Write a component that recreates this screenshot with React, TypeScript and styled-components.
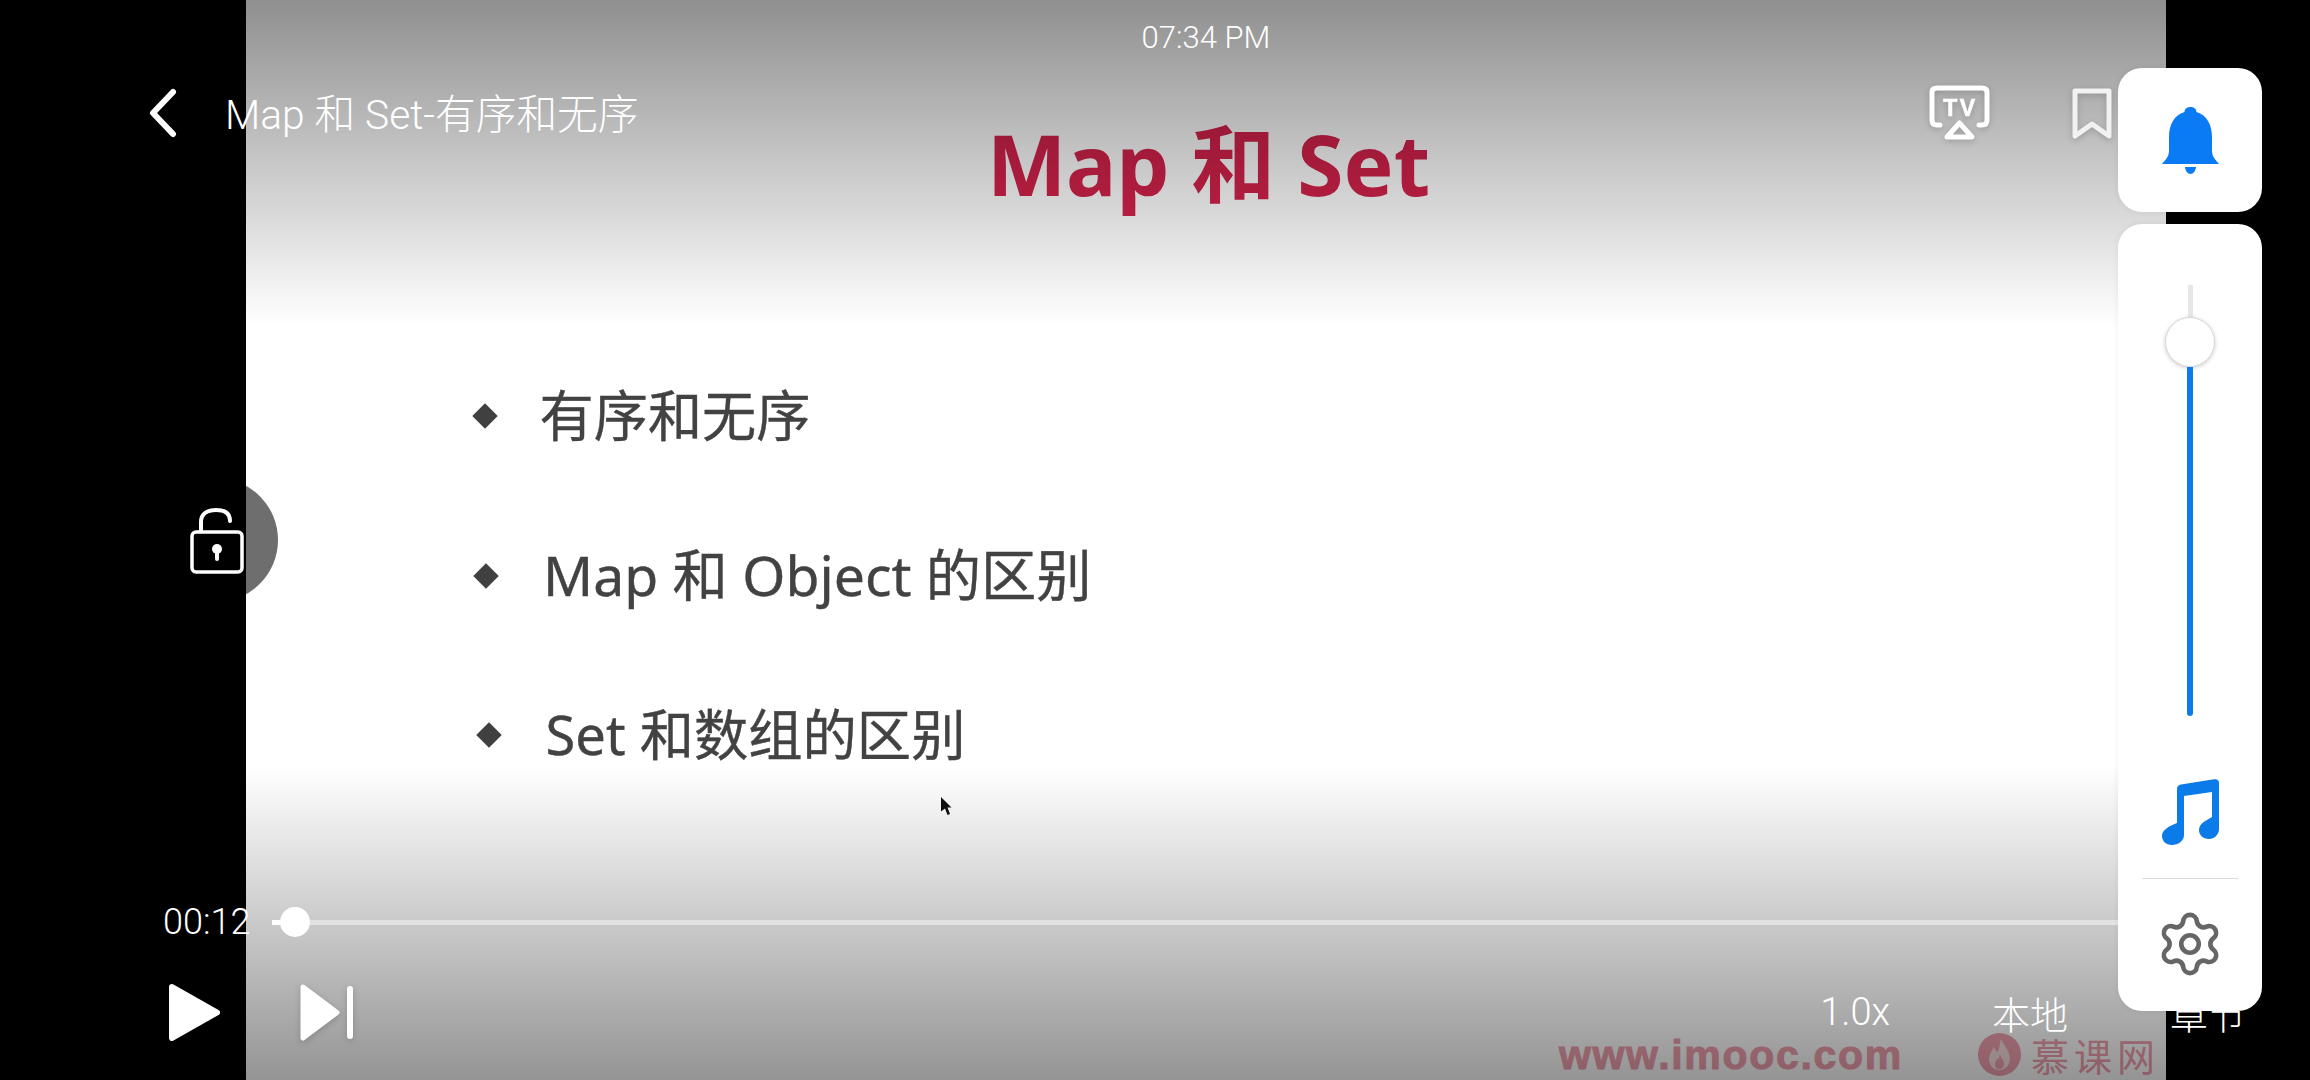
import React from 'react';
import styled, { createGlobalStyle } from 'styled-components';
import { Settings } from 'lucide-react';

const CJK = '"Noto Sans CJK SC", sans-serif';

const GlobalStyle = createGlobalStyle`
  html, body {
    margin: 0;
    padding: 0;
    background: #000;
    overflow: hidden;
  }
`;

const Stage = styled.div`
  position: relative;
  width: 2310px;
  height: 1080px;
  padding-left: 246px;
  box-sizing: border-box;
  background: #000;
  overflow: hidden;
  font-family: Roboto, ${CJK};
`;

const Slide = styled.div`
  display: flex;
  flex-direction: column;
  width: 1920px;
  height: 1080px;
  background: #fff;
`;

const SlideTitle = styled.h1`
  margin: 114px 0 0;
  height: 100px;
  padding-left: 5px;
  line-height: 100px;
  text-align: center;
  font-family: "Noto Sans", ${CJK};
  font-size: 84px;
  font-weight: 700;
  color: #d4224b;
`;

const BulletList = styled.ul`
  display: flex;
  flex-direction: column;
  gap: 79.5px;
  margin: 162px 0 0;
  padding: 0;
  list-style: none;
`;

const Bullet = styled.li<{ $indent: number; $gap: number; $size: number }>`
  display: flex;
  align-items: center;
  gap: ${({ $gap }) => $gap}px;
  height: 80px;
  padding-left: ${({ $indent }) => $indent}px;
  font-family: "Noto Sans", ${CJK};
  font-size: ${({ $size }) => $size}px;
  color: #424242;
  -webkit-text-stroke: 0.4px #424242;
`;

const BulletText = styled.span`
  margin-top: -8px;
`;

const Diamond = styled.span`
  width: 18px;
  height: 18px;
  margin: 0 3.5px;
  background: #404040;
  transform: rotate(45deg);
`;

const Watermark = styled.div`
  display: flex;
  align-items: center;
  justify-content: flex-end;
  margin-top: auto;
  padding: 0 11px 4px 0;
  line-height: 42px;
  color: #f0a0ae;
`;

const WatermarkUrl = styled.span`
  margin-right: 75px;
  font-family: "Liberation Sans", sans-serif;
  font-size: 41px;
  font-weight: 700;
  letter-spacing: 1.7px;
  -webkit-text-stroke: 1px #f0a0ae;
`;

const WatermarkName = styled.span`
  margin-left: 10px;
  margin-right: -5px;
  font-family: ${CJK};
  font-size: 38px;
  font-weight: 400;
  letter-spacing: 5px;
`;

const Cursor = styled.svg`
  position: absolute;
  left: 941px;
  top: 797px;
`;

const TopScrim = styled.div`
  position: absolute;
  inset: 0 0 auto 0;
  height: 325px;
  background: linear-gradient(to bottom, rgba(0, 0, 0, 0.44), rgba(0, 0, 0, 0));
`;

const BottomScrim = styled.div`
  position: absolute;
  inset: auto 0 0 0;
  height: 313px;
  background: linear-gradient(to top, rgba(0, 0, 0, 0.42), rgba(0, 0, 0, 0));
`;

const Controls = styled.div`
  position: absolute;
  inset: 0;
  display: flex;
  flex-direction: column;
  color: #fff;
`;

const Clock = styled.div`
  height: 30px;
  margin-top: 23px;
  padding-left: 102px;
  line-height: 30px;
  text-align: center;
  font-size: 31px;
  font-weight: 300;
`;

const TopBar = styled.div`
  display: flex;
  align-items: center;
  height: 56px;
  margin-top: 32px;
  padding-left: 149px;
`;

const PageTitle = styled.div`
  margin-left: 48px;
  padding-top: 4px;
  font-size: 40.7px;
  font-weight: 300;
  line-height: 56px;
  white-space: nowrap;
`;

const TopActions = styled.div`
  display: flex;
  align-items: center;
  gap: 82px;
  margin-left: auto;
  padding-right: 198px;
`;

const IconShadow = styled.svg`
  display: block;
  filter: drop-shadow(0 2px 3px rgba(0, 0, 0, 0.18));
`;

const LockToggle = styled.div`
  position: absolute;
  left: 154px;
  top: 478px;
  width: 124px;
  height: 124px;
  border-radius: 50%;
  background: rgba(0, 0, 0, 0.57);
`;

const LockIcon = styled.svg`
  position: absolute;
  left: 190px;
  top: 508px;
`;

const Timeline = styled.div`
  display: flex;
  align-items: center;
  height: 30px;
  margin-top: auto;
  padding: 0 110px 0 163px;
`;

const TimeLabel = styled.div`
  width: 109px;
  font-size: 36px;
  font-weight: 300;
  line-height: 30px;
  white-space: nowrap;
`;

const Track = styled.div`
  position: relative;
  flex: 1;
  height: 5px;
  background: linear-gradient(to right, #fff 23px, rgba(255, 255, 255, 0.45) 23px);
`;

const Knob = styled.div`
  position: absolute;
  left: 8px;
  top: -12.5px;
  width: 30px;
  height: 30px;
  border-radius: 50%;
  background: #fff;
`;

const BottomBar = styled.div`
  display: flex;
  align-items: center;
  height: 60px;
  margin-top: 45px;
  margin-bottom: 38px;
  padding-left: 168px;
`;

const NextIcon = styled(IconShadow)`
  margin-left: 79px;
`;

const BottomActions = styled.div`
  display: flex;
  align-items: center;
  gap: 102px;
  margin-left: auto;
  padding-right: 64px;
  font-size: 38px;
  font-weight: 300;
`;

const SideColumn = styled.div`
  position: absolute;
  left: 2118px;
  top: 68px;
  display: flex;
  flex-direction: column;
  gap: 12px;
  width: 144px;
`;

const Card = styled.div`
  display: flex;
  flex-direction: column;
  align-items: center;
  border-radius: 24px;
  background: #fff;
  box-shadow: 0 0 6px rgba(0, 0, 0, 0.07);
`;

const BellCard = styled(Card)`
  justify-content: center;
  height: 144px;
`;

const MixerCard = styled(Card)`
  height: 787px;
  padding-top: 61px;
  box-sizing: border-box;
`;

const RailTop = styled.div`
  width: 5px;
  height: 32px;
  background: #e6e6e6;
`;

const Thumb = styled.div`
  width: 48px;
  height: 48px;
  border: 1px solid #d8d8d8;
  border-radius: 50%;
  background: #fff;
  box-shadow: 0 1px 4px rgba(0, 0, 0, 0.2);
`;

const RailFill = styled.div`
  width: 6px;
  height: 349px;
  border-radius: 0 0 3px 3px;
  background: #0a7be8;
`;

const MusicIcon = styled.svg`
  display: block;
  margin-top: 63px;
`;

const Divider = styled.div`
  width: 96px;
  height: 1px;
  margin-top: 33px;
  background: #d9d9d9;
`;

const GearIcon = styled(Settings)`
  display: block;
  margin-top: 30px;
  color: #666;
`;

export default function App(): JSX.Element {
  return (
    <Stage>
      <GlobalStyle />
      <Slide>
        <SlideTitle>Map 和 Set</SlideTitle>
        <BulletList>
          <Bullet $indent={226} $gap={42.5} $size={54.2}><Diamond /><BulletText>有序和无序</BulletText></Bullet>
          <Bullet $indent={227} $gap={45} $size={55.3}><Diamond /><BulletText>Map 和 Object 的区别</BulletText></Bullet>
          <Bullet $indent={230} $gap={44.5} $size={54.3}><Diamond /><BulletText>Set 和数组的区别</BulletText></Bullet>
        </BulletList>
        <Watermark>
          <WatermarkUrl>www.imooc.com</WatermarkUrl>
          <svg width="43" height="43" viewBox="0 0 43 43">
            <circle cx="21.5" cy="21.5" r="21.5" fill="#f0a0ae" />
            <path d="M23 6c2 6 9 11 9 20 0 6-5 11-11 11S11 32 11 26c0-5 3-8 5-12 1 3 2 4 4 5 1-4 2-8 3-13z" fill="#f6dde0" />
            <path d="M22 22c1 3 4 5 4 9 0 3-2 5-5 5s-4-2-4-5c0-3 2-4 3-6 0 1 1 2 1 2 0-2 0-3 1-5z" fill="#f0a0ae" />
          </svg>
          <WatermarkName>慕课网</WatermarkName>
        </Watermark>
      </Slide>
      <Cursor width="11" height="18" viewBox="0 0 11 18">
        <path d="M0 0 L10.5 10.5 H6.5 L9 17 L6.5 18 L4 11.5 L0 14.5 Z" fill="#111" />
      </Cursor>
      <TopScrim />
      <BottomScrim />
      <LockToggle />
      <Controls>
        <Clock>07:34 PM</Clock>
        <TopBar>
          <svg width="28" height="50" viewBox="0 0 28 50">
            <polyline points="24,4 4,25 24,46" fill="none" stroke="#fff" strokeWidth="6" strokeLinecap="round" strokeLinejoin="round" />
          </svg>
          <PageTitle>Map 和 Set-有序和无序</PageTitle>
          <TopActions>
            <IconShadow width="61" height="56" viewBox="0 0 61 56">
              <path d="M11 40 H8 Q3 40 3 35 V7 Q3 3 8 3 H53 Q58 3 58 7 V35 Q58 40 53 40 H50" fill="none" stroke="#fff" strokeWidth="5" strokeLinecap="round" />
              <text x="31.5" y="31" textAnchor="middle" fontFamily="Liberation Sans" fontWeight="700" fontSize="23" letterSpacing="2.5" stroke="#fff" strokeWidth="0.6" fill="#fff">TV</text>
              <polygon points="30.5,38 43,52 18,52" fill="none" stroke="#fff" strokeWidth="5" strokeLinejoin="round" />
            </IconShadow>
            <IconShadow width="40" height="51" viewBox="0 0 40 51">
              <path d="M3 3 H37 V48 L20 36 L3 48 Z" fill="none" stroke="#f2f2f2" strokeWidth="5" strokeLinejoin="round" />
            </IconShadow>
          </TopActions>
        </TopBar>
        <Timeline>
          <TimeLabel>00:12</TimeLabel>
          <Track>
            <Knob />
          </Track>
        </Timeline>
        <BottomBar>
          <IconShadow width="53" height="59" viewBox="0 0 53 59">
            <polygon points="4,4 49,29.5 4,55" fill="#fff" stroke="#fff" strokeWidth="6" strokeLinejoin="round" />
          </IconShadow>
          <NextIcon width="53" height="59" viewBox="0 0 53 59">
            <polygon points="3,4 37,29.5 3,55" fill="#fff" stroke="#fff" strokeWidth="5" strokeLinejoin="round" />
            <rect x="47" y="3" width="6" height="53" rx="3" fill="#fff" />
          </NextIcon>
          <BottomActions>
            <span>1.0x</span>
            <span>本地</span>
            <span>章节</span>
          </BottomActions>
        </BottomBar>
      </Controls>
      <LockIcon width="54" height="66" viewBox="0 0 54 66">
        <path d="M11 24 V14 C11 5 18 2 26 2 C34 2 40 5 40 13" fill="none" stroke="#fff" strokeWidth="4" strokeLinecap="round" />
        <rect x="2" y="24" width="50" height="40" rx="4" fill="#000" stroke="#fff" strokeWidth="3.5" />
        <circle cx="27" cy="41" r="5" fill="#fff" />
        <rect x="25" y="42" width="4" height="11" rx="2" fill="#fff" />
      </LockIcon>
      <SideColumn>
        <BellCard>
          <svg width="57" height="67" viewBox="0 0 57 67">
            <path d="M28.5 0 C32 0 34.5 2 34.5 5 C45 8 50 18 50 30 V44 C50 50 54 53 57 57 H0 C3 53 7 50 7 44 V30 C7 18 12 8 22.5 5 C22.5 2 25 0 28.5 0 Z" fill="#0a7bf5" />
            <path d="M23 60 H34 C33.5 64 31.5 67 28.5 67 C25.5 67 23.5 64 23 60 Z" fill="#0a7bf5" />
          </svg>
        </BellCard>
        <MixerCard>
          <RailTop />
          <Thumb />
          <RailFill />
          <MusicIcon width="57" height="66" viewBox="0 0 57 66">
            <path d="M15 10 Q15 6 19 5.4 L52 0.2 Q57 -0.4 57 4 V50 C57 56 52 60 47 60 C41 60 37 56 37 51 C37 45 43 42 50 38 V13 L22 17 V56 C22 62 16 66 10 66 C4 66 0 62 0 57 C0 51 7 47 15 44 Z" fill="#0a7be8" />
          </MusicIcon>
          <Divider />
          <GearIcon size={70} strokeWidth={1.6} />
        </MixerCard>
      </SideColumn>
    </Stage>
  );
}
